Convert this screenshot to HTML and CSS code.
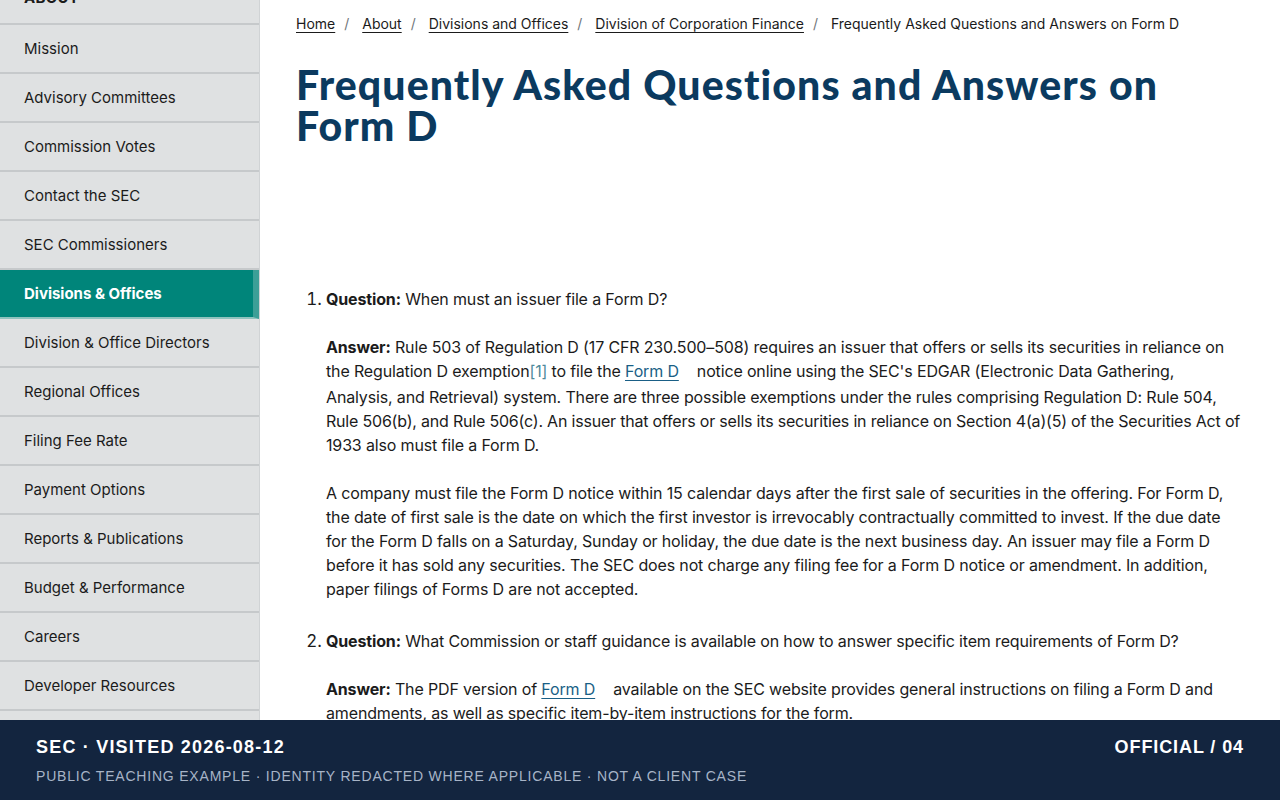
FILE: index.html
```html
<!DOCTYPE html>
<html lang="en">
<head>
<meta charset="utf-8">
<title>Frequently Asked Questions and Answers on Form D</title>
<link rel="stylesheet" href="styles.css">
</head>
<body>
<div class="page">
  <nav class="sidenav">
    <div class="sidenav-head"><span>ABOUT</span></div>
    <a class="nav-item" href="#">Mission</a>
    <a class="nav-item" href="#">Advisory Committees</a>
    <a class="nav-item" href="#">Commission Votes</a>
    <a class="nav-item" href="#">Contact the SEC</a>
    <a class="nav-item" href="#">SEC Commissioners</a>
    <a class="nav-item active" href="#">Divisions &amp; Offices</a>
    <a class="nav-item" href="#">Division &amp; Office Directors</a>
    <a class="nav-item" href="#">Regional Offices</a>
    <a class="nav-item" href="#">Filing Fee Rate</a>
    <a class="nav-item" href="#">Payment Options</a>
    <a class="nav-item" href="#">Reports &amp; Publications</a>
    <a class="nav-item" href="#">Budget &amp; Performance</a>
    <a class="nav-item" href="#">Careers</a>
    <a class="nav-item" href="#">Developer Resources</a>
    <a class="nav-item" href="#">Freedom of Information</a>
  </nav>
  <main class="content">
    <div class="breadcrumb">
      <a href="#">Home</a><span class="sep">/</span>
      <a href="#">About</a><span class="sep">/</span>
      <a href="#">Divisions and Offices</a><span class="sep">/</span>
      <a href="#">Division of Corporation Finance</a><span class="sep">/</span>
      <span class="current">Frequently Asked Questions and Answers on Form D</span>
    </div>
    <h1 class="title">Frequently Asked Questions and Answers on Form D</h1>
    <ol class="faq">
      <li>
        <p><strong>Question:</strong> When must an issuer file a Form D?</p>
        <p><strong>Answer:</strong> Rule 503 of Regulation D (17 CFR 230.500–508) requires an issuer that offers or sells its securities in reliance on the Regulation D exemption<a class="fn" href="#">[1]</a> to file the <a class="link" href="#">Form D</a><span class="gap"></span>notice online using the SEC's EDGAR (Electronic Data Gathering, Analysis, and Retrieval) system. There are three possible exemptions under the rules comprising Regulation D: Rule 504, <span class="snug">Rule 506(b), and Rule 506(c). An issuer that offers or sells its securities in reliance on Section 4(a)(5) of the Securities Act of</span> 1933 also must file a Form D.</p>
        <p>A company must file the Form D notice within 15 calendar days after the first sale of securities in the offering. For Form D, the date of first sale is the date on which the first investor is irrevocably contractually committed to invest. If the due date for the Form D falls on a Saturday, Sunday or holiday, the due date is the next business day. An issuer may file a Form D before it has sold any securities. The SEC does not charge any filing fee for a Form D notice or amendment. In addition, paper filings of Forms D are not accepted.</p>
      </li>
      <li>
        <p><strong>Question:</strong> What Commission or staff guidance is available on how to answer specific item requirements of Form D?</p>
        <p><strong>Answer:</strong> The PDF version of <a class="link" href="#">Form D</a><span class="gap"></span>available on the SEC website provides general instructions on filing a Form D and amendments, as well as specific item-by-item instructions for the form.</p>
      </li>
    </ol>
  </main>
</div>
<footer class="stamp">
  <div class="stamp-row">
    <div class="stamp-main">SEC · VISITED 2026-08-12</div>
    <div class="stamp-id">OFFICIAL / 04</div>
  </div>
  <div class="stamp-sub">PUBLIC TEACHING EXAMPLE · IDENTITY REDACTED WHERE APPLICABLE · NOT A CLIENT CASE</div>
</footer>
</body>
</html>
```
FILE: styles.css
```css
* { box-sizing: border-box; }
html, body { margin: 0; padding: 0; }
body {
  font-family: "Inter", "Noto Sans", sans-serif;
  color: #1b1b1b;
  background: #fff;
  height: 800px;
  overflow: hidden;
}
.page {
  display: flex;
  align-items: flex-start;
}
.sidenav {
  width: 260px;
  flex: 0 0 260px;
  background: #dfe1e2;
  border-right: 1px solid #d0d3d5;
  display: flex;
  flex-direction: column;
}
.sidenav-head {
  height: 6px;
  overflow: hidden;
  display: flex;
  align-items: flex-end;
  padding: 0 24px 17px;
  border-bottom: 2px solid #c6c9cb;
  box-sizing: content-box;
  font-weight: 700;
  font-size: 15px;
  line-height: 16px;
  letter-spacing: 0.3px;
}
.nav-item {
  display: flex;
  align-items: center;
  height: 49px;
  padding: 0 24px;
  border-bottom: 2px solid #c6c9cb;
  color: #1b1b1b;
  text-decoration: none;
  font-size: 15px;
}
.nav-item.active {
  background: #00857a;
  color: #fff;
  font-weight: 700;
  border-right: 6px solid #3d9f97;
  border-bottom-color: #8fc3be;
}
.content {
  flex: 1;
  padding: 0 36px 0 36px;
  min-width: 0;
}
.breadcrumb {
  padding-top: 14px;
  font-size: 14px;
  line-height: 20px;
  color: #1b1b1b;
  white-space: nowrap;
}
.breadcrumb a {
  color: #1b1b1b;
  text-decoration: underline;
  text-underline-offset: 3px;
}
.breadcrumb .sep {
  color: #71767a;
  margin: 0 9px;
}
.title {
  margin: 30px 0 0;
  max-width: 948px;
  font-family: "Lato", "Inter", sans-serif;
  font-weight: 900;
  font-size: 41px;
  line-height: 41px;
  color: #0b3a5f;
  letter-spacing: 1.1px;
}
.faq {
  margin: 141px 0 0;
  padding: 0 0 0 30px;
  font-size: 16px;
  line-height: 24px;
  letter-spacing: -0.15px;
}
.faq li {
  margin-bottom: 28px;
}
.faq li::marker {
  font-size: 17px;
}
.faq p {
  margin: 0 0 24px;
}
.faq li p:last-child { margin-bottom: 0; }
.faq strong { font-weight: 700; }
.snug { letter-spacing: -0.2px; }
.link {
  color: #1a5f86;
  text-decoration: underline;
  text-underline-offset: 3px;
}
.fn {
  display: inline-block;
  padding-bottom: 2px;
  color: #4f8a9c;
  text-decoration: none;
}
.gap {
  display: inline-block;
  width: 18px;
}
.stamp {
  position: fixed;
  left: 0;
  right: 0;
  bottom: 0;
  height: 80px;
  background: #13253f;
  padding: 16px 36px 0;
  font-family: "Liberation Sans", Arial, sans-serif;
}
.stamp-row {
  display: flex;
  justify-content: space-between;
  align-items: center;
}
.stamp-main, .stamp-id {
  color: #fff;
  font-weight: 700;
  font-size: 18px;
  letter-spacing: 1.2px;
  line-height: 22px;
}
.stamp-id { letter-spacing: 0.9px; }
.stamp-sub {
  margin-top: 9px;
  color: #a7b4c7;
  font-size: 14px;
  letter-spacing: 0.8px;
  line-height: 18px;
}
```
